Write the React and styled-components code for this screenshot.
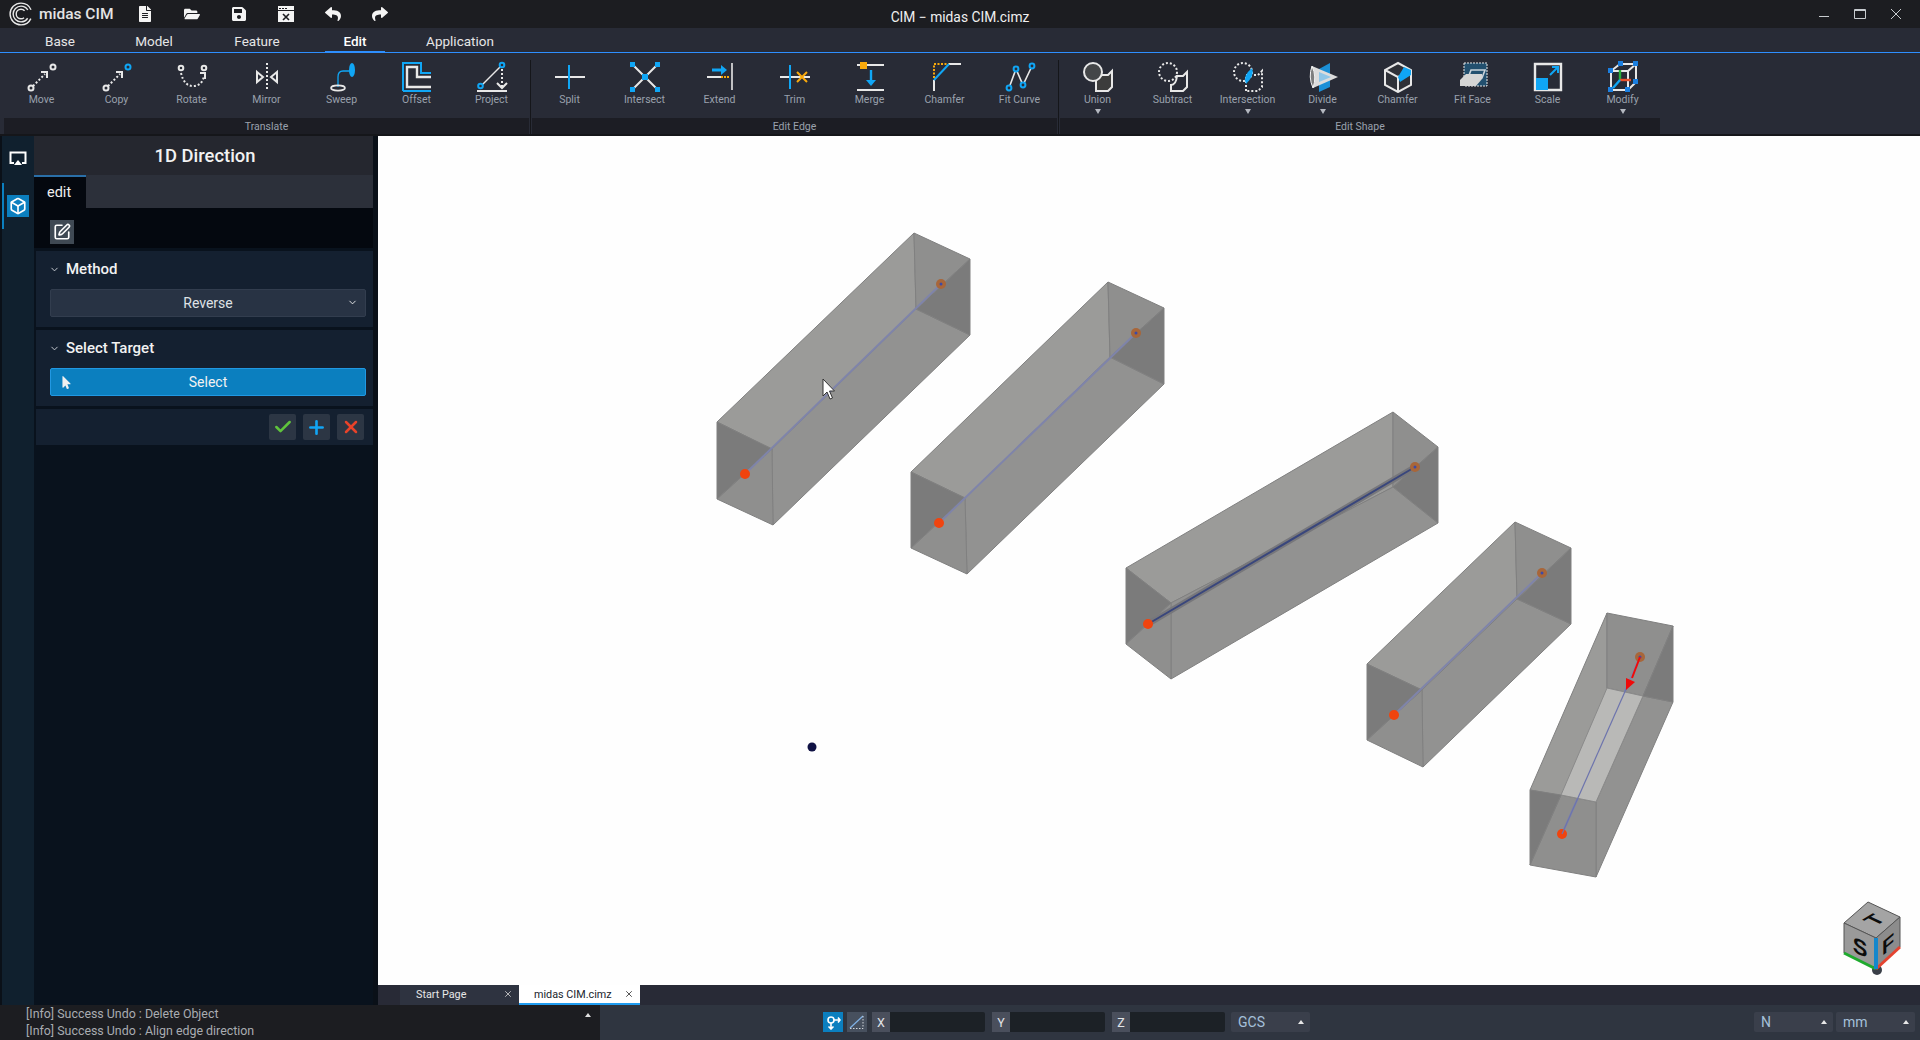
import React from "react";
import styled, { createGlobalStyle } from "styled-components";
import { FaFileAlt, FaFolderOpen, FaSave, FaReply, FaShare, FaMousePointer } from "react-icons/fa";
import { Check, ChevronDown, Plus, X, Box, SquarePen } from "lucide-react";

const WHITE = "#e8e8e8";
const BLUE = "#10a6f5";
const ORANGE = "#f8a90c";

const GlobalStyle = createGlobalStyle`
    html, body {
        margin: 0;
        height: 100%;
        overflow: hidden;
        background: #0a1420;
    }
    body {
        font-family: "Roboto", "Liberation Sans", sans-serif;
    }
    * {
        box-sizing: border-box;
    }
`;

const Shell = styled.div`
    display: flex;
    flex-direction: column;
    width: 1920px;
    height: 1040px;
`;

/* title bar */
const TitleBar = styled.div`
    position: relative;
    display: flex;
    align-items: center;
    height: 28px;
    background: #1c1d21;
    color: #f0f0f0;
    flex-shrink: 0;
`;

const Logo = styled.div`
    display: flex;
    align-items: center;
    gap: 6px;
    width: 121px;
    padding-left: 9px;
    font-size: 15.5px;
    font-weight: 500;
    color: #e4e4e4;
`;

const QuickButton = styled.div`
    display: flex;
    align-items: center;
    justify-content: center;
    width: 47px;
    height: 28px;
    color: #f4f4f4;
    font-size: 16px;
`;

const WindowTitle = styled.div`
    position: absolute;
    left: 0;
    right: 0;
    top: 0;
    line-height: 34px;
    text-align: center;
    font-size: 13.8px;
    color: #f0f0f0;
    pointer-events: none;
`;

const WindowButtons = styled.div`
    display: flex;
    margin-left: auto;
    padding-right: 6px;
    position: relative;
`;

const WindowButton = styled.div`
    display: flex;
    align-items: center;
    justify-content: center;
    width: 36px;
    height: 28px;
`;

/* menu tabs */
const MenuBar = styled.div`
    display: flex;
    height: 25px;
    padding-left: 25px;
    background: #282b36;
    border-bottom: 1px solid #2e8fff;
    flex-shrink: 0;
`;

const MenuTab = styled.div`
    width: ${(p) => p.$width}px;
    margin-left: ${(p) => p.$gap || 0}px;
    text-align: center;
    font-size: 13.5px;
    line-height: 27px;
    color: ${(p) => (p.$active ? "#ffffff" : "#e6e6e6")};
    font-weight: ${(p) => (p.$active ? 500 : 400)};
    border-bottom: ${(p) => (p.$active ? "2px solid #2e8fff" : "none")};
    height: ${(p) => (p.$active ? 25 : 24)}px;
`;

/* ribbon */
const Ribbon = styled.div`
    display: flex;
    height: 83px;
    padding-left: 4px;
    background: #282b36;
    border-bottom: 2px solid #15161a;
    flex-shrink: 0;
`;

const RibbonGroup = styled.div`
    display: flex;
    flex-direction: column;
    width: ${(p) => p.$width}px;
`;

const RibbonItems = styled.div`
    display: flex;
    height: 65px;
    flex-shrink: 0;
    overflow: hidden;
`;

const RibbonItem = styled.div`
    display: flex;
    flex-direction: column;
    align-items: center;
    width: 75px;
    padding-top: 8px;
    svg {
        display: block;
    }
`;

const RibbonLabel = styled.div`
    font-size: 10.5px;
    line-height: 13px;
    color: #9aa1ad;
    white-space: nowrap;
`;

const Caret = styled.div`
    margin-top: 3px;
    width: 0;
    height: 0;
    border-left: 3px solid transparent;
    border-right: 3px solid transparent;
    border-top: 5px solid #b4b8c0;
`;

const GroupName = styled.div`
    height: 16px;
    line-height: 17px;
    font-size: 10.5px;
    text-align: center;
    color: #9aa1ad;
    background: #1c1d24;
`;

const GroupDivider = styled.div`
    width: 1px;
    margin: 7px 1px 0 1px;
    background: #15161a;
`;

/* main area */
const Main = styled.div`
    display: flex;
    flex: 1;
    min-height: 0;
`;

const Sidebar = styled.div`
    display: flex;
    width: 378px;
    padding-left: 2px;
    background: #0a1018;
`;

const Rail = styled.div`
    width: 32px;
    background: #10202e;
    flex-shrink: 0;
`;

const RailSlot = styled.div`
    display: flex;
    align-items: center;
    justify-content: center;
    height: 46px;
    color: #fff;
    border-left: 2px solid ${(p) => (p.$active ? "#0b7fbf" : "transparent")};
    padding-right: 2px;
    margin-bottom: ${(p) => p.$gap || 0}px;
`;

const RailIcon = styled.div`
    display: flex;
    align-items: center;
    justify-content: center;
    width: 22px;
    height: 22px;
    background: ${(p) => (p.$active ? "#0b7fbf" : "transparent")};
`;

const Panel = styled.div`
    display: flex;
    flex-direction: column;
    width: 339px;
    background: #09121d;
`;

const PanelTitle = styled.div`
    height: 39px;
    line-height: 39px;
    text-align: center;
    padding-left: 3px;
    font-size: 18.4px;
    font-weight: 500;
    color: #f2f2f2;
    background: #25272f;
`;

const PanelTabs = styled.div`
    display: flex;
    height: 33px;
    background: #2c303a;
`;

const PanelTab = styled.div`
    width: 52px;
    padding-left: 13px;
    font-size: 14.5px;
    line-height: 31px;
    color: #f0f0f0;
    background: #04080f;
    border-top: 2px solid #2a6fa8;
`;

const PanelTools = styled.div`
    height: 40px;
    padding: 12px 16px 0;
    background: #04080f;
`;

const EditButton = styled.div`
    display: flex;
    align-items: center;
    justify-content: center;
    width: 24px;
    height: 24px;
    background: #3f4954;
    color: #fff;
`;

const Card = styled.div`
    margin: 3px 0 0 2px;
    padding: 0 7px 10px 14px;
    background: #142030;
`;

const CardHead = styled.div`
    display: flex;
    align-items: center;
    gap: 6px;
    height: 38px;
    padding-bottom: 2px;
    font-size: 15px;
    font-weight: 500;
    color: #f2f2f2;
    svg {
        color: #d0d4da;
        margin-left: -1px;
    }
`;

const Picker = styled.div`
    position: relative;
    height: 28px;
    line-height: 26px;
    text-align: center;
    font-size: 14px;
    color: ${(p) => (p.$primary ? "#f2f2f2" : "#dfe2e6")};
    background: ${(p) => (p.$primary ? "#0b7fbf" : "#283344")};
    border: 1px solid ${(p) => (p.$primary ? "#2198e2" : "#323d4e")};
    border-radius: 2px;
`;

const PickerIcon = styled.span`
    position: absolute;
    top: 7px;
    ${(p) => (p.$right ? "right: 7px;" : "left: 9px;")}
    display: flex;
    color: #f0f0f0;
`;

const Actions = styled.div`
    display: flex;
    justify-content: flex-end;
    gap: 7px;
    height: 36px;
    padding: 5px 9px 0 0;
    margin: 3px 0 0 2px;
    background: #142030;
`;

const ActionButton = styled.div`
    display: flex;
    align-items: center;
    justify-content: center;
    width: 27px;
    height: 26px;
    background: #2c3644;
    border-radius: 2px;
    color: ${(p) => p.$color};
`;

/* viewport */
const Workspace = styled.div`
    display: flex;
    flex-direction: column;
    flex: 1;
    min-width: 0;
`;

const Viewport = styled.div`
    flex: 1;
    min-height: 0;
    background: #fefefe;
    svg {
        display: block;
    }
`;

const DocTabs = styled.div`
    display: flex;
    height: 20px;
    padding-left: 22px;
    background: #282a36;
    flex-shrink: 0;
`;

const DocTab = styled.div`
    display: flex;
    align-items: center;
    width: ${(p) => p.$width}px;
    padding: 0 6px 0 ${(p) => (p.$active ? 15 : 16)}px;
    font-size: 10.8px;
    color: ${(p) => (p.$active ? "#20242c" : "#e8e8e8")};
    background: ${(p) => (p.$active ? "#ffffff" : "#2e3340")};
    border-bottom: 2px solid ${(p) => (p.$active ? "#1f9cf0" : "transparent")};
    svg {
        margin-left: auto;
    }
`;

/* status bar */
const StatusBar = styled.div`
    display: flex;
    height: 35px;
    background: #2f3540;
    flex-shrink: 0;
`;

const LogPane = styled.div`
    position: relative;
    width: 600px;
    padding-left: 26px;
    background: #1c1d21;
    color: #a9acb1;
    font-size: 12.4px;
    line-height: 17px;
`;

const LogCaret = styled.div`
    position: absolute;
    top: 8px;
    right: 9px;
    width: 0;
    height: 0;
    border-left: 3px solid transparent;
    border-right: 3px solid transparent;
    border-bottom: 4px solid #e0e0e0;
`;

const SnapTools = styled.div`
    display: flex;
    align-items: center;
    gap: 4px;
    margin-left: 223px;
    padding-bottom: 1px;
`;

const SnapButton = styled.div`
    display: flex;
    align-items: center;
    justify-content: center;
    width: 20px;
    height: 20px;
    background: ${(p) => (p.$active ? "#0b7fbf" : "#47505e")};
`;

const Field = styled.div`
    display: flex;
    width: 113px;
    height: 20px;
    margin-left: ${(p) => p.$gap}px;
    background: #1c2126;
    border-radius: 2px;
`;

const FieldLabel = styled.div`
    width: 18px;
    text-align: center;
    font-size: 12.5px;
    line-height: 21px;
    color: #e2e4e8;
    background: #4a4f5c;
`;

const UnitSelect = styled.div`
    display: flex;
    align-items: center;
    justify-content: space-between;
    width: 79px;
    height: 20px;
    padding: 0 6px 0 7px;
    margin-left: ${(p) => p.$gap || 0}px;
    font-size: 14px;
    color: #a5c0da;
    background: #3a3f4b;
    border-radius: 2px;
`;

const UnitCaret = styled.span`
    width: 0;
    height: 0;
    border-left: 3px solid transparent;
    border-right: 3px solid transparent;
    border-bottom: 4px solid #e8e8e8;
`;

const UnitGroup = styled.div`
    display: flex;
    align-items: center;
    margin-left: auto;
    padding: 0 5px 1px 0;
`;

/* ribbon icons */
const Icon = ({ children }) => (
    <svg width="32" height="32" viewBox="0 0 32 32" fill="none" strokeLinecap="butt">
        {children}
    </svg>
);

const Dots = (props) => <line stroke={WHITE} strokeWidth="2" strokeDasharray="2 2" {...props} />;

const MoveIcon = ({ tip = WHITE }) => (
    <Icon>
        <circle cx="5" cy="27" r="2.5" stroke={WHITE} strokeWidth="2" />
        <circle cx="27" cy="6" r="2.5" stroke={tip} strokeWidth="2" />
        <Dots x1="7" y1="25" x2="19" y2="13" />
        <path d="M15 11h6v6" stroke={WHITE} strokeWidth="2" />
    </Icon>
);

const icons = {
    Move: <MoveIcon />,
    Copy: <MoveIcon tip={BLUE} />,
    Rotate: (
        <Icon>
            <circle cx="5" cy="7" r="2.3" stroke={WHITE} strokeWidth="2" />
            <circle cx="28" cy="7" r="2.3" stroke={WHITE} strokeWidth="2" />
            <path d="M5 12Q8 25 17 25T28 15" stroke={WHITE} strokeWidth="2" strokeDasharray="2 2" />
            <path d="M24 12h5v6" stroke={WHITE} strokeWidth="2" />
        </Icon>
    ),
    Mirror: (
        <Icon>
            <Dots x1="16" y1="2" x2="16" y2="30" />
            <path d="M6 11l6 5-6 5zM26 11l-6 5 6 5z" stroke={WHITE} strokeWidth="2" />
        </Icon>
    ),
    Sweep: (
        <Icon>
            <ellipse cx="26" cy="9" rx="3" ry="7" fill={BLUE} />
            <path d="M24 10H17Q12 10 12 16V26" stroke={BLUE} strokeWidth="1.3" />
            <ellipse cx="12" cy="27" rx="7" ry="2.6" stroke={WHITE} strokeWidth="1.6" />
        </Icon>
    ),
    Offset: (
        <Icon>
            <path d="M2 30V2h18v10h10M2 30h28" stroke={BLUE} strokeWidth="2" />
            <path d="M30 16H16V6H6v20h24" stroke={WHITE} strokeWidth="2.4" />
        </Icon>
    ),
    Project: (
        <Icon>
            <path d="M6 24L24 6" stroke={WHITE} strokeWidth="1.5" />
            <circle cx="4.5" cy="25" r="2.3" stroke={BLUE} strokeWidth="2" />
            <circle cx="26" cy="4" r="2.3" stroke={BLUE} strokeWidth="2" />
            <Dots x1="26" y1="8" x2="26" y2="27" />
            <path d="M21 22l5 5 5-5" stroke={WHITE} strokeWidth="2" />
            <path d="M1 30h30" stroke={WHITE} strokeWidth="2" />
        </Icon>
    ),
    Split: (
        <Icon>
            <path d="M1 16h30" stroke={WHITE} strokeWidth="2" />
            <path d="M15 4v24" stroke={BLUE} strokeWidth="2" />
        </Icon>
    ),
    Intersect: (
        <Icon>
            <path d="M4 4l24 24M28 4L4 28" stroke={WHITE} strokeWidth="2" />
            <path d="M1 1h5v5H1zM26 1h5v5h-5zM1 26h5v5H1zM26 26h5v5h-5zM13 13h6v6h-6z" fill={BLUE} />
        </Icon>
    ),
    Extend: (
        <Icon>
            <path d="M3 16h14" stroke={WHITE} strokeWidth="2" />
            <path d="M17 16h9" stroke={ORANGE} strokeWidth="2" strokeDasharray="2 1" />
            <path d="M28 2v27" stroke={WHITE} strokeWidth="1.6" />
            <path d="M8 9h12" stroke={BLUE} strokeWidth="3" />
            <path d="M17 4l6 5-6 5z" fill={BLUE} />
        </Icon>
    ),
    Trim: (
        <Icon>
            <path d="M1 16h30" stroke={WHITE} strokeWidth="2" />
            <path d="M11 4v24" stroke={BLUE} strokeWidth="2" />
            <path d="M18 11l10 10M28 11L18 21" stroke={ORANGE} strokeWidth="2" />
        </Icon>
    ),
    Merge: (
        <Icon>
            <path d="M3 4h27M3 29h27" stroke={WHITE} strokeWidth="2" />
            <path d="M6 1h7v7H6z" fill={ORANGE} />
            <path d="M17 9v13" stroke={BLUE} strokeWidth="2.4" />
            <path d="M12 19h10l-5 6z" fill={BLUE} />
        </Icon>
    ),
    Chamfer: (
        <Icon>
            <path d="M5 19v11M20 3h12" stroke={WHITE} strokeWidth="2" />
            <path d="M5 17V3h15" stroke={ORANGE} strokeWidth="2" strokeDasharray="2 1.5" />
            <path d="M5 19L20 3" stroke={BLUE} strokeWidth="2" />
        </Icon>
    ),
    "Fit Curve": (
        <Icon>
            <path d="M5 27L12 8l7 16 9-19" stroke={WHITE} strokeWidth="1.6" />
            <circle cx="5" cy="27" r="2.4" stroke={BLUE} strokeWidth="2" fill="#282b36" />
            <circle cx="12" cy="8" r="2.4" stroke={BLUE} strokeWidth="2" fill="#282b36" />
            <circle cx="19" cy="24" r="2.4" stroke={BLUE} strokeWidth="2" fill="#282b36" />
            <circle cx="28" cy="5" r="2.4" stroke={BLUE} strokeWidth="2" fill="#282b36" />
        </Icon>
    ),
    Union: (
        <Icon>
            <path d="M14 14h12l4-4v16l-4 4H14z" stroke={WHITE} strokeWidth="2" fill="#3c3c3c" />
            <circle cx="11" cy="11" r="9" stroke={WHITE} strokeWidth="2" fill="#444648" />
        </Icon>
    ),
    Subtract: (
        <Icon>
            <path d="M14 30v-6q5 0 6-9h6l4-4v15l-4 4z" stroke={WHITE} strokeWidth="2" />
            <circle cx="11" cy="11" r="9" stroke={WHITE} strokeWidth="2" strokeDasharray="2 2" />
        </Icon>
    ),
    Intersection: (
        <Icon>
            <circle cx="11" cy="11" r="9" stroke={WHITE} strokeWidth="2" strokeDasharray="2 2" />
            <path d="M14 30V14h12l4-4v16l-4 4z" stroke={WHITE} strokeWidth="2" strokeDasharray="2 2" />
            <path d="M20 8q3 7-6 16q-4-8 6-16z" transform="translate(0,-1)" fill={BLUE} />
        </Icon>
    ),
    Divide: (
        <Icon>
            <path d="M12 8L23 2v24l-11 5z" fill="#1b8fd6" />
            <path d="M5 5Q2 16 6 27L31 16z" fill="#dcdcdc" />
            <path d="M12 11L24 16 12 21z" fill="#8fc6e8" />
            <path d="M5 5Q10 16 6 27Q1 16 5 5z" fill="#7e7e7e" stroke="#f2f2f2" />
        </Icon>
    ),
    "Chamfer Shape": (
        <Icon>
            <path d="M16 2L29 9v15l-13 7-13-7V9z" stroke={WHITE} strokeWidth="2" fill="#2f3138" />
            <path d="M3 9l13 7v15M16 16l1-1" stroke={WHITE} strokeWidth="2" />
            <path d="M22 6l7 3v5l-11 7-2-5z" fill={BLUE} />
        </Icon>
    ),
    "Fit Face": (
        <Icon>
            <path d="M7 2h23v23H7z" fill="#23506f" stroke="#e8e8e8" strokeDasharray="2 1" />
            <path d="M14 9h14l-3 8H11z" fill="none" stroke="#c9d2da" strokeWidth="1.6" />
            <path d="M3 19l6-6h16v5l-6 7H3z" fill="#d5d5d5" />
        </Icon>
    ),
    Scale: (
        <Icon>
            <path d="M3 3h26v26H3z" stroke={WHITE} strokeWidth="2.4" />
            <path d="M4 17h12v12H4z" fill={BLUE} />
            <path d="M18 14l7-7M20 6h6v6" stroke={BLUE} strokeWidth="2" />
        </Icon>
    ),
    Modify: (
        <Icon>
            <path d="M4 10l9-7h16v18l-8 8H4zM4 10h17v19M21 10l8-7" stroke={WHITE} strokeWidth="2" />
            <path d="M1 7h5v5H1zM11 0h5v5h-5zM26 0h5v5h-5zM26 18h5v5h-5zM1 26h5v5H1zM18 26h5v5h-5z" fill="#1b7fe0" />
            <path d="M13 19V9" stroke="#27b03a" strokeWidth="2.4" />
            <path d="M13 19h11" stroke="#e8502a" strokeWidth="2.4" />
            <path d="M13 19L6 27" stroke={BLUE} strokeWidth="2.4" />
        </Icon>
    ),
};

const ribbonGroups = [
    {
        name: "Translate",
        width: 525,
        items: [
            { label: "Move" },
            { label: "Copy" },
            { label: "Rotate" },
            { label: "Mirror" },
            { label: "Sweep" },
            { label: "Offset" },
            { label: "Project" },
        ],
    },
    {
        name: "Edit Edge",
        width: 525,
        items: [
            { label: "Split" },
            { label: "Intersect" },
            { label: "Extend" },
            { label: "Trim" },
            { label: "Merge" },
            { label: "Chamfer" },
            { label: "Fit Curve" },
        ],
    },
    {
        name: "Edit Shape",
        width: 600,
        items: [
            { label: "Union", caret: true },
            { label: "Subtract" },
            { label: "Intersection", caret: true },
            { label: "Divide", caret: true },
            { label: "Chamfer", icon: "Chamfer Shape" },
            { label: "Fit Face" },
            { label: "Scale" },
            { label: "Modify", caret: true },
        ],
    },
];

const menuTabs = [
    { label: "Base", width: 70 },
    { label: "Model", width: 118 },
    { label: "Feature", width: 88 },
    { label: "Edit", width: 60, gap: 24, active: true },
    { label: "Application", width: 150 },
];

const pts = (...list) => list.map((p) => p.join(",")).join(" ");

// one translucent beam of the model, corners read from the view
const Beam = ({ l, lb, b, c, bt, br, rb, bc, frontApex = c, backApex = bc, axis, axisColor = "#7f84aa", axisWidth = 2, band }) => (
    <g stroke="#808080" strokeWidth="1" strokeLinejoin="round">
        <polygon points={pts(l, bt, bc, c)} fill="#9b9b99" />
        <polygon points={pts(c, backApex, rb, b)} fill="#929291" />
        <polygon points={pts(bc, backApex, c)} fill="#929291" stroke="none" />
        <polygon points={pts(bt, br, backApex, bc)} fill="#8f8f8e" />
        <polygon points={pts(br, rb, backApex)} fill="#7b7b7b" />
        <polygon points={pts(lb, frontApex, c, b)} fill="#8f8f8e" />
        <polygon points={pts(l, frontApex, lb)} fill="#7b7b7b" />
        {band && (
            <line x1={axis[0][0]} y1={axis[0][1]} x2={axis[1][0]} y2={axis[1][1]} stroke="#77777b" strokeWidth={band} />
        )}
        <line x1={axis[0][0]} y1={axis[0][1]} x2={axis[1][0]} y2={axis[1][1]} stroke={axisColor} strokeWidth={axisWidth} />
        <circle cx={axis[0][0]} cy={axis[0][1]} r="5" fill="#f0440f" stroke="none" />
        <circle cx={axis[1][0]} cy={axis[1][1]} r="5" fill="#a8663a" stroke="none" />
        <circle cx={axis[1][0]} cy={axis[1][1]} r="1.5" fill="#3c4aa8" stroke="none" />
    </g>
);

const Scene = () => (
    <svg width="1542" height="849" viewBox="378 136 1542 849">
        <Beam l={[717, 422]} lb={[717, 499]} b={[773, 525]} c={[772, 449]} bt={[914, 233]} br={[970, 259]} rb={[970, 335]} bc={[916, 309]} axis={[[745, 474], [941, 284]]} />
        <Beam l={[911, 472]} lb={[911, 548]} b={[967, 574]} c={[965, 498]} bt={[1108, 282]} br={[1164, 308]} rb={[1164, 384]} bc={[1110, 357]} axis={[[939, 523], [1136, 333]]} />
        <Beam l={[1126, 568]} lb={[1126, 644]} b={[1171, 679]} c={[1171, 603]} bt={[1393, 412]} br={[1438, 447]} rb={[1438, 523]} bc={[1393, 487]} axis={[[1148, 624], [1415, 467]]} axisColor="#39467c" axisWidth={2} band={6} />
        <Beam l={[1367, 664]} lb={[1367, 740]} b={[1423, 767]} c={[1422, 690]} bt={[1515, 522]} br={[1571, 548]} rb={[1571, 624]} bc={[1517, 599]} axis={[[1394, 715], [1542, 573]]} />
        <Beam l={[1530, 790]} lb={[1530, 865]} b={[1596, 877]} c={[1596, 802]} bt={[1607, 613]} br={[1673, 626]} rb={[1673, 702]} bc={[1607, 688]} frontApex={[1561, 795]} backApex={[1643, 696]} axis={[[1562, 834], [1640, 657]]} />
        <polygon points={pts([1607, 688], [1643, 696], [1596, 802], [1561, 795])} fill="#b9b9b7" stroke="#8a8a8a" />
        <line x1="1562" y1="834" x2="1627" y2="687" stroke="#6d74ad" strokeWidth="1.2" />
        <path d="M1640 657L1632 678" stroke="#f00a0a" strokeWidth="2" />
        <polygon points="1626,690 1626,678 1635,682" fill="#f00a0a" />
        <circle cx="812" cy="747" r="4.5" fill="#101244" />
        <path d="M823 379v17l4-4 3 7 2.5-1-3-7h5z" fill="#fff" stroke="#333" strokeWidth="1" />

        {/* view cube */}
        <g stroke="#555" strokeWidth="1">
            <polygon points="1868,902 1900,917 1876,938 1844,923" fill="#a4a4a4" />
            <polygon points="1844,923 1876,938 1876,969 1844,953" fill="#9a9a9a" />
            <polygon points="1876,938 1900,917 1900,947 1876,969" fill="#8c8c8c" />
        </g>
        <circle cx="1877" cy="970" r="5" fill="#3a3f48" />
        <path d="M1844 953L1876 969" stroke="#1faa2e" strokeWidth="3" />
        <path d="M1876 969L1900 947" stroke="#e4432f" strokeWidth="3" />
        <path d="M1876 938V969" stroke="#1487cc" strokeWidth="4" />
        <g fontFamily="Liberation Sans, sans-serif" fontWeight="700" fill="#0c0c0c">
            <text transform="translate(1881,923) matrix(.83,-.5,.9,.42,0,0)" fontSize="22" textAnchor="middle">T</text>
            <text transform="translate(1860,955) matrix(1,.46,0,1,0,0)" fontSize="22" textAnchor="middle">S</text>
            <text transform="translate(1888,951) matrix(1,-.85,0,1,0,0)" fontSize="20" textAnchor="middle">F</text>
        </g>
    </svg>
);

const App = () => (
    <Shell>
        <GlobalStyle />
        <TitleBar>
            <Logo>
                <svg width="24" height="24" viewBox="0 0 22 22" fill="none" stroke="#e8e8e8" strokeWidth="1.3">
                    <circle cx="11" cy="11" r="10" strokeDasharray="54 8.8" strokeDashoffset="-4.4" />
                    <circle cx="11" cy="11" r="7.2" strokeDasharray="37 8.2" strokeDashoffset="-4.1" />
                    <circle cx="11" cy="11" r="4.4" strokeDasharray="20 7.6" strokeDashoffset="-3.8" />
                </svg>
                midas CIM
            </Logo>
            <QuickButton><FaFileAlt /></QuickButton>
            <QuickButton><FaFolderOpen /></QuickButton>
            <QuickButton><FaSave /></QuickButton>
            <QuickButton>
                <svg width="16" height="16" viewBox="0 0 16 16">
                    <path d="M0 0h16v16H0z" fill="#f4f4f4" />
                    <path d="M1 2h2v1H1zM4 2h2v1H4zM7 2h2v1H7zM0 4h16v1H0z" fill="#1c1d21" />
                    <path d="M5 8l6 6M11 8l-6 6" stroke="#1c1d21" strokeWidth="1.6" />
                </svg>
            </QuickButton>
            <QuickButton><FaReply /></QuickButton>
            <QuickButton><FaShare /></QuickButton>
            <WindowTitle>CIM − midas CIM.cimz</WindowTitle>
            <WindowButtons>
                <WindowButton>
                    <svg width="12" height="12" viewBox="0 0 12 12"><path d="M1 8.5h10" stroke="#c8ccd0" /></svg>
                </WindowButton>
                <WindowButton>
                    <svg width="12" height="12" viewBox="0 0 12 12"><path d="M.5 1.5h11v9H.5zM.5 2.5h11" fill="none" stroke="#c8ccd0" /></svg>
                </WindowButton>
                <WindowButton>
                    <svg width="12" height="12" viewBox="0 0 12 12"><path d="M1 1l10 10M11 1L1 11" stroke="#c8ccd0" /></svg>
                </WindowButton>
            </WindowButtons>
        </TitleBar>

        <MenuBar>
            {menuTabs.map((tab) => (
                <MenuTab key={tab.label} $width={tab.width} $gap={tab.gap} $active={tab.active}>
                    {tab.label}
                </MenuTab>
            ))}
        </MenuBar>

        <Ribbon>
            {ribbonGroups.map((group, i) => (
                <React.Fragment key={group.name}>
                    {i > 0 && <GroupDivider />}
                    <RibbonGroup $width={group.width}>
                        <RibbonItems>
                            {group.items.map((item) => (
                                <RibbonItem key={item.label}>
                                    {icons[item.icon || item.label]}
                                    <RibbonLabel>{item.label}</RibbonLabel>
                                    {item.caret && <Caret />}
                                </RibbonItem>
                            ))}
                        </RibbonItems>
                        <GroupName>{group.name}</GroupName>
                    </RibbonGroup>
                </React.Fragment>
            ))}
        </Ribbon>

        <Main>
            <Sidebar>
                <Rail>
                    <RailSlot $gap={1}>
                        <svg width="18" height="18" viewBox="0 0 18 18" fill="none">
                            <path d="M5 13H1.5V2.5h15V13H13" stroke="#fff" strokeWidth="2" />
                            <path d="M9 10l4 5H5z" fill="#fff" />
                        </svg>
                    </RailSlot>
                    <RailSlot $active>
                        <RailIcon $active>
                            <Box size={18} strokeWidth={2.2} color="#fff" />
                        </RailIcon>
                    </RailSlot>
                </Rail>
                <Panel>
                    <PanelTitle>1D Direction</PanelTitle>
                    <PanelTabs>
                        <PanelTab>edit</PanelTab>
                    </PanelTabs>
                    <PanelTools>
                        <EditButton>
                            <SquarePen size={18} strokeWidth={2.2} />
                        </EditButton>
                    </PanelTools>
                    <Card>
                        <CardHead>
                            <ChevronDown size={11} strokeWidth={2} />
                            Method
                        </CardHead>
                        <Picker>
                            Reverse
                            <PickerIcon $right>
                                <ChevronDown size={11} strokeWidth={2} />
                            </PickerIcon>
                        </Picker>
                    </Card>
                    <Card>
                        <CardHead>
                            <ChevronDown size={11} strokeWidth={2} />
                            Select Target
                        </CardHead>
                        <Picker $primary>
                            <PickerIcon>
                                <FaMousePointer size={13} />
                            </PickerIcon>
                            Select
                        </Picker>
                    </Card>
                    <Actions>
                        <ActionButton $color="#5fc43c">
                            <Check size={20} strokeWidth={3} />
                        </ActionButton>
                        <ActionButton $color="#12a5f4">
                            <Plus size={21} strokeWidth={3} />
                        </ActionButton>
                        <ActionButton $color="#e8432a">
                            <X size={20} strokeWidth={3} />
                        </ActionButton>
                    </Actions>
                </Panel>
            </Sidebar>

            <Workspace>
                <Viewport>
                    <Scene />
                </Viewport>
                <DocTabs>
                    <DocTab $width={119}>
                        Start Page
                        <X size={10} color="#d0d0d0" />
                    </DocTab>
                    <DocTab $width={121} $active>
                        midas CIM.cimz
                        <X size={10} color="#333" />
                    </DocTab>
                </DocTabs>
            </Workspace>
        </Main>

        <StatusBar>
            <LogPane>
                [Info] Success Undo : Delete Object
                <br />
                [Info] Success Undo : Align edge direction
                <LogCaret />
            </LogPane>
            <SnapTools>
                <SnapButton $active>
                    <svg width="16" height="16" viewBox="0 0 16 16" fill="none" stroke="#fff" strokeWidth="1.6">
                        <circle cx="6" cy="6" r="3" />
                        <path d="M6 9v6M3.5 12.5L6 15l2.5-2.5M9 6h6M13 3.5L15 6l-2 2.5" />
                    </svg>
                </SnapButton>
                <SnapButton>
                    <svg width="16" height="16" viewBox="0 0 16 16" fill="none">
                        <path d="M1 14L14 2" stroke="#7fb0e4" strokeWidth="1.3" />
                        <path d="M1 14.5h13V2" stroke="#d0d4da" strokeDasharray="1.5 1.5" />
                    </svg>
                </SnapButton>
                <Field $gap={1}><FieldLabel>X</FieldLabel></Field>
                <Field $gap={3}><FieldLabel>Y</FieldLabel></Field>
                <Field $gap={3}><FieldLabel>Z</FieldLabel></Field>
                <UnitSelect $gap={2}>GCS<UnitCaret /></UnitSelect>
            </SnapTools>
            <UnitGroup>
                <UnitSelect>N<UnitCaret /></UnitSelect>
                <UnitSelect $gap={3}>mm<UnitCaret /></UnitSelect>
            </UnitGroup>
        </StatusBar>
    </Shell>
);

export default App;
